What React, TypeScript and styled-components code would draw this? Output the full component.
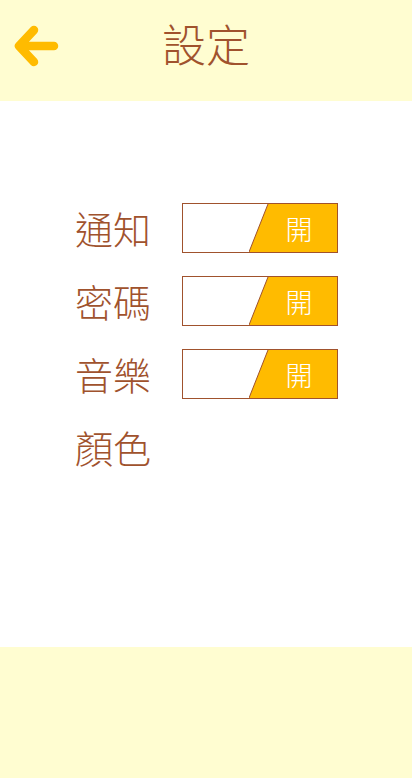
import React from "react";
import styled, { createGlobalStyle } from "styled-components";

const GlobalStyle = createGlobalStyle`
  html, body { margin: 0; padding: 0; background: #ffffff; }
  body { font-family: "Noto Sans CJK TC", "Noto Sans", sans-serif; }
`;

const BROWN = "#a0522d";
const YELLOW = "#ffbb00";
const CREAM = "#fffdd1";

const Page = styled.div`
  width: 412px;
  height: 778px;
  display: flex;
  flex-direction: column;
`;

const Header = styled.header`
  height: 101px;
  background: ${CREAM};
  display: grid;
  grid-template-columns: 70px 1fr 70px;
  align-items: center;
  flex-shrink: 0;
`;

const BackButton = styled.button`
  border: none;
  background: none;
  padding: 0;
  margin: -10px 0 0 12px;
  width: 50px;
  height: 50px;
  display: flex;
  align-items: center;
  justify-content: center;
  cursor: pointer;
`;

const Title = styled.h1`
  margin: -15px 0 0 0;
  text-align: center;
  font-size: 44px;
  font-weight: 300;
  line-height: 1;
  color: ${BROWN};
`;

const Content = styled.main`
  flex: 1;
  background: #ffffff;
  padding: 102px 0 0 75px;
  display: flex;
  flex-direction: column;
  gap: 23px;
`;

const Row = styled.div`
  display: grid;
  grid-template-columns: 107px 156px;
  align-items: center;
  height: 50px;
`;

const Label = styled.span`
  font-size: 38px;
  font-weight: 300;
  line-height: 1;
  color: ${BROWN};
  white-space: nowrap;
`;

const Toggle = styled.button`
  position: relative;
  width: 156px;
  height: 50px;
  padding: 0;
  border: 1px solid ${BROWN};
  background: #ffffff;
  box-sizing: border-box;
  overflow: hidden;
  cursor: pointer;
  font-family: inherit;
`;

const ToggleFill = styled.span`
  position: absolute;
  top: 0;
  right: 0;
  bottom: 0;
  width: 88px;
  background: ${YELLOW};
  clip-path: polygon(19px 0, 100% 0, 100% 100%, 0 100%);
  display: flex;
  align-items: center;
  justify-content: center;
  padding-left: 12px;
  box-sizing: border-box;
  color: #ffffff;
  font-size: 27px;
  font-weight: 300;
  line-height: 1;
`;

const SlantEdge = styled.svg`
  position: absolute;
  top: 0;
  right: 0;
  width: 88px;
  height: 48px;
  pointer-events: none;
`;

const Footer = styled.footer`
  height: 131px;
  background: ${CREAM};
  flex-shrink: 0;
`;

const rows = [
  { label: "通知", toggle: true },
  { label: "密碼", toggle: true },
  { label: "音樂", toggle: true },
  { label: "顏色", toggle: false },
];

export default function App() {
  return (
    <>
      <GlobalStyle />
      <Page>
        <Header>
          <BackButton aria-label="返回">
            <svg width="50" height="50" viewBox="0 0 50 50">
              <path
                d="M7 25 H42 M22 9 L7 25 L22 41"
                fill="none"
                stroke={YELLOW}
                strokeWidth="8.5"
                strokeLinecap="round"
                strokeLinejoin="round"
              />
            </svg>
          </BackButton>
          <Title>設定</Title>
          <div />
        </Header>
        <Content>
          {rows.map((r) => (
            <Row key={r.label}>
              <Label>{r.label}</Label>
              {r.toggle && (
                <Toggle>
                  <ToggleFill>開</ToggleFill>
                  <SlantEdge viewBox="0 0 88 48">
                    <line x1="0" y1="48" x2="19" y2="0" stroke={BROWN} strokeWidth="1" />
                  </SlantEdge>
                </Toggle>
              )}
            </Row>
          ))}
        </Content>
        <Footer />
      </Page>
    </>
  );
}
